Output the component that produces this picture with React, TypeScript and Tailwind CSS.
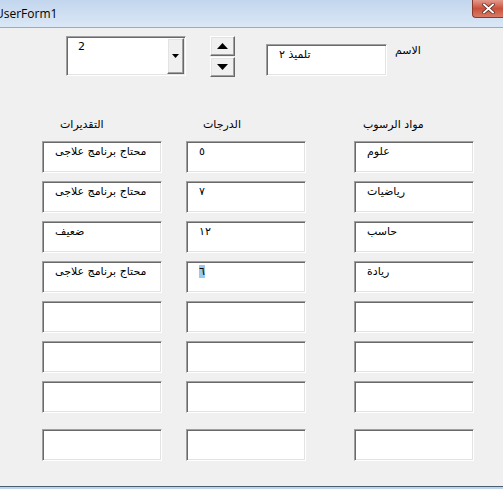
import React from "react";

const sunken =
  "bg-white border border-t-[#a0a0a0] border-l-[#a0a0a0] border-b-white border-r-white shadow-[inset_1px_1px_0_#696969,inset_-1px_-1px_0_#e3e3e3]";
const raised =
  "bg-[#f0f0f0] border border-t-white border-l-white border-b-[#696969] border-r-[#696969] shadow-[inset_-1px_-1px_0_#a0a0a0,inset_1px_1px_0_#e3e3e3]";

const font = { fontFamily: '"DejaVu Sans", Tahoma, sans-serif' };

function Box({ text, mlClass = "", selected = false }: { text?: string; mlClass?: string; selected?: boolean }) {
  return (
    <div className={`${sunken} ${mlClass} w-[120px] h-[32px] pl-[12px] pt-[3px] text-[11px] leading-[14px] text-black`}>
      {text ? (
        selected ? (
          <span className="bg-[#99c9ef]">{text}</span>
        ) : (
          <span>{text}</span>
        )
      ) : null}
    </div>
  );
}

const rows: { a: string; b: string; c: string; sel?: boolean }[] = [
  { a: "محتاج برنامج علاجى", b: "٥", c: "علوم" },
  { a: "محتاج برنامج علاجى", b: "٧", c: "رياضيات" },
  { a: "ضعيف", b: "١٢", c: "حاسب" },
  { a: "محتاج برنامج علاجى", b: "٦", c: "ريادة", sel: true },
  { a: "", b: "", c: "" },
  { a: "", b: "", c: "" },
  { a: "", b: "", c: "" },
];

export default function App() {
  return (
    <div className="w-[503px] h-[489px] bg-[#f0f0f0] overflow-hidden flex flex-col" style={font}>
      {/* title bar */}
      <div className="relative h-[28px] shrink-0 bg-gradient-to-b from-[#c2d6ee] via-[#cfdff2] to-[#dae7f6] border-b border-[#9cabbb] flex items-center">
        <span className="ml-[-5px] mt-[1px] text-[12px] text-black" style={{ fontFamily: '"Open Sans", "DejaVu Sans", sans-serif' }}>
          UserForm1
        </span>
        <div className="absolute right-0 top-0 w-[31px] h-[18px] rounded-bl-[4px] border border-t-0 border-r-0 border-[#8a3a2c] bg-gradient-to-b from-[#e39a8c] via-[#c9503a] to-[#d87a66] flex items-center justify-center">
          <svg width="13" height="11" viewBox="0 0 13 11">
            <path d="M2 1.5 L11 9.5 M11 1.5 L2 9.5" stroke="#5a2a22" strokeWidth="3.4" strokeLinecap="square" />
            <path d="M2 1.5 L11 9.5 M11 1.5 L2 9.5" stroke="#ffffff" strokeWidth="1.9" strokeLinecap="square" />
          </svg>
        </div>
      </div>

      {/* body */}
      <div className="flex-1 flex flex-col">
        {/* top controls */}
        <div className="flex items-start pt-[8px] pl-[66px]">
          <div className={`${sunken} w-[120px] h-[40px] flex justify-between`}>
            <span className="pl-[11px] pt-[3px] text-[11px] leading-[14px]">2</span>
            <div className={`${raised} w-[17px] h-[36px] mt-[1px] mr-[1px] flex items-center justify-center`}>
              <svg width="7" height="4" viewBox="0 0 7 4">
                <path d="M0 0 H7 L3.5 4 Z" fill="#000" />
              </svg>
            </div>
          </div>
          <div className="ml-[24px] flex flex-col w-[25px] h-[41px]">
            <div className={`${raised} h-[20px] flex items-center justify-center`}>
              <svg width="11" height="6" viewBox="0 0 11 6">
                <path d="M0 6 H11 L5.5 0 Z" fill="#000" />
              </svg>
            </div>
            <div className={`${raised} h-[20px] mt-[1px] flex items-center justify-center`}>
              <svg width="11" height="6" viewBox="0 0 11 6">
                <path d="M0 0 H11 L5.5 6 Z" fill="#000" />
              </svg>
            </div>
          </div>
          <div className={`${sunken} ml-[31px] mt-[8px] w-[121px] h-[32px] pl-[12px] pt-[3px] text-[11px] leading-[14px]`}>
            تلميذ ٢
          </div>
          <div className="ml-[8px] mt-[8px] text-[11px] leading-[14px]">الاسم</div>
        </div>

        {/* headers */}
        <div className="flex pl-[42px] mt-[41px] text-[11px] leading-[14px]">
          <div className="w-[120px] pl-[18px]">التقديرات</div>
          <div className="w-[120px] ml-[24px] pl-[17px]">الدرجات</div>
          <div className="w-[120px] ml-[48px] pl-[9px]">مواد الرسوب</div>
        </div>

        {/* grid rows */}
        <div className="flex flex-col gap-[8px] pl-[42px] mt-[9px]">
          {rows.map((r, i) => (
            <div key={i} className="flex">
              <Box text={r.a} />
              <Box text={r.b} mlClass="ml-[24px]" selected={r.sel} />
              <Box text={r.c} mlClass="ml-[48px]" />
            </div>
          ))}
        </div>
        <div className="flex pl-[42px] mt-[16px]">
          <Box />
          <Box mlClass="ml-[24px]" />
          <Box mlClass="ml-[48px]" />
        </div>
      </div>

      {/* bottom edge */}
      <div className="h-[3px] shrink-0 border-t border-[#4e5d6c] bg-[#bcd4ec]" />
    </div>
  );
}
